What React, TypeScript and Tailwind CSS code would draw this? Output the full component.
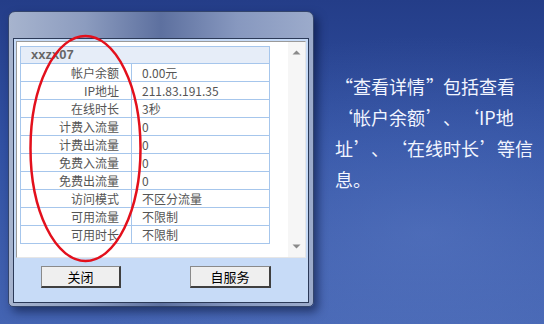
import React from "react";

const rows: [string, string][] = [
  ["帐户余额", "0.00元"],
  ["IP地址", "211.83.191.35"],
  ["在线时长", "3秒"],
  ["计费入流量", "0"],
  ["计费出流量", "0"],
  ["免费入流量", "0"],
  ["免费出流量", "0"],
  ["访问模式", "不区分流量"],
  ["可用流量", "不限制"],
  ["可用时长", "不限制"],
];

function O({ c }: { c: string }) {
  return <span className="inline-block w-[18px] text-right pr-[1px]">{c}</span>;
}
function C({ c }: { c: string }) {
  return <span className="inline-block w-[18px] text-left pl-[1px]">{c}</span>;
}

export default function App() {
  return (
    <div className="relative w-[544px] h-[324px] overflow-hidden bg-[linear-gradient(180deg,#243d88_0%,#3151a3_45%,#4464b2_100%)] font-['Noto_Sans_CJK_SC',sans-serif]">
      <div className="absolute inset-0 bg-[radial-gradient(ellipse_at_78%_72%,rgba(110,140,210,0.35)_0%,rgba(110,140,210,0)_60%)]" />
      <div className="relative flex items-start pl-[8px] pt-[11px]">
        {/* window */}
        <div className="w-[306px] h-[296px] rounded-t-[7px] rounded-b-[5px] border border-[#34456c] bg-[linear-gradient(90deg,#a7b4ce_0%,#8c9cbf_25%,#5d709f_50%,#8798bf_75%,#9cabcb_100%)] pl-[4px] pr-[4px] pt-[26px] pb-[3px] shadow-[4px_5px_10px_rgba(5,15,50,0.55)]">
          <div className="h-full border border-[#2c3a58] bg-[#c7dbf7] flex flex-col">
            {/* list panel */}
            <div className="m-[2px] mb-0 h-[217px] border-t border-l border-[#9a9a9a] border-b border-r border-b-[#e6e6e6] border-r-[#e6e6e6] bg-white flex">
              <div className="ml-[3px] mt-[4px] w-[250px] border-t border-l border-r border-[#a6c6ec] self-start text-[12px] leading-[17px] text-[#555]">
                <div className="h-[17px] border-b border-[#a6c6ec] bg-[#e6edf8] pl-[10px] font-bold text-[13px] leading-[16px] text-[#666] font-['Liberation_Sans',sans-serif]">
                  xxzx07
                </div>
                {rows.map(([k, v]) => (
                  <div key={k} className="flex h-[18px] border-b border-[#a6c6ec]">
                    <div className="w-[111px] border-r border-[#a6c6ec] text-right pr-[12px]">{k}</div>
                    <div className="pl-[10px]">{v}</div>
                  </div>
                ))}
              </div>
              <div className="ml-auto w-[17px] h-full bg-[#f6f6f6] flex flex-col items-center justify-between py-[8px]">
                <svg width="9" height="5" viewBox="0 0 9 5">
                  <path d="M0.5 4.5 L4.5 0.5 L8.5 4.5 Z" fill="#8a8a8a" />
                </svg>
                <svg width="9" height="5" viewBox="0 0 9 5">
                  <path d="M0.5 0.5 L4.5 4.5 L8.5 0.5 Z" fill="#8a8a8a" />
                </svg>
              </div>
            </div>
            {/* buttons */}
            <div className="flex pl-[27px] pt-[8px] text-[13px] text-black">
              <button className="w-[80px] h-[22px] bg-[#efefef] border-t border-l border-[#8a8a8a] border-b-2 border-r-2 border-b-[#3f3f3f] border-r-[#3f3f3f] leading-[18px]">
                关闭
              </button>
              <button className="ml-[69px] w-[81px] h-[22px] bg-[#efefef] border-t border-l border-[#8a8a8a] border-b-2 border-r-2 border-b-[#3f3f3f] border-r-[#3f3f3f] leading-[18px]">
                自服务
              </button>
            </div>
          </div>
        </div>
        {/* right text */}
        <div className="ml-[21px] mt-[60px] text-[18px] leading-[31px] text-[#f2f5ff]">
          <div className="whitespace-nowrap">
            <O c="“" />查看详情<C c="”" />包括查看
          </div>
          <div className="whitespace-nowrap">
            <O c="‘" />帐户余额<C c="’" />、<O c="‘" />IP地
          </div>
          <div className="whitespace-nowrap">
            址<C c="’" />、<O c="‘" />在线时长<C c="’" />等信
          </div>
          <div className="whitespace-nowrap">息。</div>
        </div>
      </div>
      {/* red ellipse */}
      <svg className="absolute left-0 top-0" width="544" height="324" viewBox="0 0 544 324">
        <ellipse cx="85.5" cy="148.5" rx="55" ry="112.5" fill="none" stroke="#e3101c" strokeWidth="2.5" />
      </svg>
    </div>
  );
}
